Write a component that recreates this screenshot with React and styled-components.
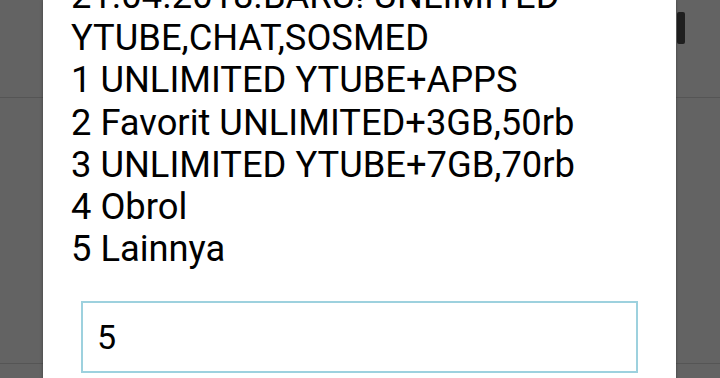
import React from "react";
import styled, { createGlobalStyle } from "styled-components";

const Global = createGlobalStyle`
  html, body { margin: 0; padding: 0; }
  body { width: 720px; height: 378px; overflow: hidden; background: #636363; }
  #root { width: 720px; height: 378px; }
`;

const Screen = styled.div`
  position: relative;
  width: 720px;
  height: 378px;
  overflow: hidden;
  background: #636363;
`;

const Row = styled.div`
  height: ${(p) => p.h}px;
  border-bottom: 1px solid #555555;
  box-sizing: border-box;
`;

const Handle = styled.div`
  position: absolute;
  left: 677px;
  top: 12px;
  width: 8px;
  height: 32px;
  border-radius: 2px;
  background: #1f1f1f;
`;

const Dialog = styled.div`
  position: absolute;
  left: 43px;
  top: 0;
  width: 633px;
  height: 420px;
  background: #ffffff;
  box-shadow: 0 0 3px rgba(0, 0, 0, 0.35);
  overflow: hidden;
  display: flex;
  flex-direction: column;
`;

const Message = styled.div`
  margin-top: -25px;
  padding-left: 28px;
  font-family: Roboto, "Liberation Sans", sans-serif;
  font-size: 36.3px;
  line-height: 42.2px;
  color: #000;
`;

const Line = styled.div`
  white-space: nowrap;
`;

const Input = styled.div`
  margin: 31px 0 0 38px;
  width: 557px;
  height: 72px;
  box-sizing: border-box;
  border: 2px solid #9dd1de;
  padding-left: 14px;
  display: flex;
  align-items: center;
  font-family: Roboto, "Liberation Sans", sans-serif;
  font-size: 34px;
  color: #000;
`;

const lines = [
  "21.04.2018.BARU! UNLIMITED",
  "YTUBE,CHAT,SOSMED",
  "1 UNLIMITED YTUBE+APPS",
  "2 Favorit UNLIMITED+3GB,50rb",
  "3 UNLIMITED YTUBE+7GB,70rb",
  "4 Obrol",
  "5 Lainnya",
];

export default function App() {
  return (
    <Screen>
      <Global />
      <Row h={98} />
      <Row h={266} />
      <Handle />
      <Dialog>
        <Message>
          {lines.map((l) => (
            <Line key={l}>{l}</Line>
          ))}
        </Message>
        <Input>5</Input>
      </Dialog>
    </Screen>
  );
}
